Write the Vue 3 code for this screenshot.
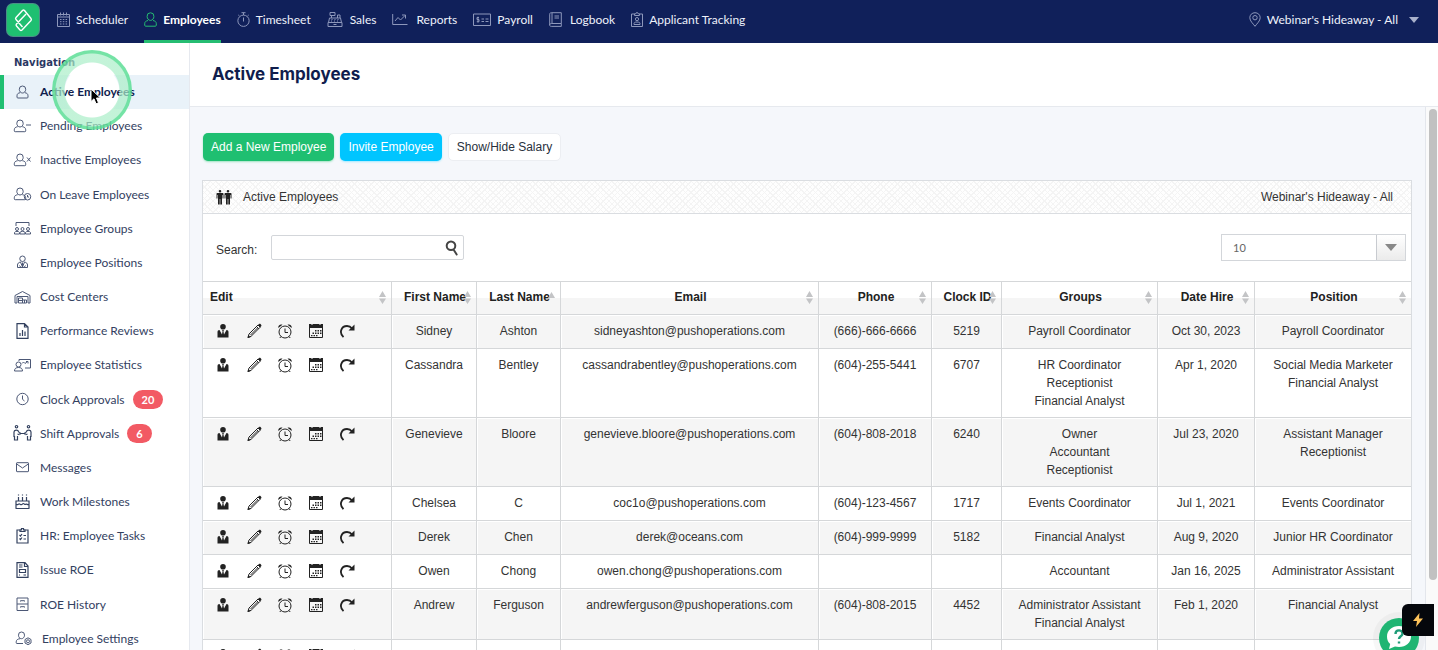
<script setup>
import { ref } from 'vue'

const topNav = [
  { label: 'Scheduler', w: 13, box: '0 0 13 15', gap: 6, d: 'M.5 2.5h12v12H.5zM.5 5h12M3.5.5v3M6.5.5v3M9.5.5v3M3 7.5h1.500M5.800 7.500h1.500M8.600 7.500h1.500M3 9.700h1.500M5.800 9.700h1.500M8.600 9.700h1.500M3 12h1.500M5.800 12h1.500M8.600 12h1.500' },
  { label: 'Employees', w: 13, box: '0 0 13 15', gap: 6, active: true, d: 'M6.500 .8a3.400 3.400 0 0 1 3.400 3.600c0 2.200-1.500 4-3.400 4s-3.400-1.800-3.400-4A3.400 3.400 0 0 1 6.500.8zM4 8.500c-2 .4-3.300 1.300-3.300 3.200v1.500c0 .7.400 1 1 1h9.600c.6 0 1-.3 1-1v-1.500c0-1.900-1.300-2.800-3.300-3.200' },
  { label: 'Timesheet', w: 13, box: '0 0 13 15', gap: 6, d: 'M6.500 3.100a5.600 5.600 0 1 1 0 11.300 5.600 5.600 0 0 1 0-11.300zM6.500 3V.800M4.500.700h4M6.500 5.500v4M1.300 3l1.200 1M11.700 3l-1.200 1' },
  { label: 'Sales', w: 16, box: '0 0 16 15', gap: 7, d: 'M1 10.500h14v4H1zM1.500 10.500l1-4.500h11l1 4.500M4.500 6V3.500M3 .500h5v3H3zM10.500 6V3h2.500v3M4.500 7.500h1M7.500 7.500h1M10.500 7.500h1M4 9h1M7 9h1M10 9h1M6.500 12.500h3' },
  { label: 'Reports', w: 16, box: '0 0 16 15', gap: 8, d: 'M.7 2v10.500h14.800M3 9l3-3.500 2.500 2.500 4.500-4.500M10 3h3.500v3.500' },
  { label: 'Payroll', w: 18, box: '0 0 18 15', gap: 6, d: 'M.500 2h17v11.500H.500zM6 5.500H4v2h2v2.200H3.800M5 4.700v5.800M8.500 7h2.500M12.500 7h3M8.500 9.500h2.500M12.500 9.500h3' },
  { label: 'Logbook', w: 13, box: '0 0 13 15', gap: 8, d: 'M2.300.700h10v10.800h-10C1.300 11.500.700 12 .700 13s.600 1.400 1.600 1.400h10M.700 13V2.200C.700 1.200 1.300.700 2.300.700M3 .700v10.800M12.300 11.500v2.900M5.500 4h4.500M5.500 6h4.500' },
  { label: 'Applicant Tracking', w: 12, box: '0 0 12 15', gap: 6, d: 'M3.500 2h-3v12.500h11V2h-3M3.500 3.500V1.800h1.300a1.200 1.200 0 0 1 2.400 0h1.300v1.700zM6 5.500a1.600 1.600 0 0 1 0 3.200 1.600 1.600 0 0 1 0-3.200zM3 12.500v-1c0-1 1-1.500 3-1.500s3 .500 3 1.500v1z' }
]

const person = 'M7 3a3.200 3.200 0 0 1 3.200 3.300C10.200 8.300 8.800 10 7 10S3.800 8.300 3.800 6.300A3.200 3.200 0 0 1 7 3zM4.700 9.700C2.500 10 1.300 11 1.300 12.800v1c0 .600.300.900.900.900h9.600c.600 0 .9-.3.9-.9v-1c0-1.800-1.200-2.800-3.400-3.100'
const sideNav = [
  { label: 'Active Employees', active: true, d: 'M9.500 3a3.200 3.200 0 0 1 3.200 3.300c0 2-1.400 3.700-3.200 3.700S6.300 8.300 6.300 6.300A3.200 3.200 0 0 1 9.500 3zM7.200 9.700C5 10 4 11 4 12.800v1.300c0 .600.300.900.900.900h9.200c.600 0 .9-.3.9-.9v-1.300c0-1.800-1-2.800-3.200-3.100' },
  { label: 'Pending Employees', d: person + 'M13 8h5' },
  { label: 'Inactive Employees', d: person + 'M14 6.500l3.500 4M17.500 6.500l-3.500 4' },
  { label: 'On Leave Employees', d: person + 'M14.500 8.500a3.200 3.200 0 1 1 0 6.500 3.200 3.200 0 0 1 0-6.500zM14.500 10v2h1.500' },
  { label: 'Employee Groups', d: 'M3 7V3.500h13V7M4 8.500a1.500 1.500 0 1 1 0 3 1.500 1.500 0 0 1 0-3zM9.500 8.500a1.500 1.500 0 1 1 0 3 1.500 1.500 0 0 1 0-3zM15 8.500a1.500 1.500 0 1 1 0 3 1.500 1.500 0 0 1 0-3zM1.500 15v-1.500C2 12 6 12 6.500 13.500V15zM7 15v-1.500c.5-1.500 4.500-1.500 5 0V15zM12.500 15v-1.500c.5-1.500 4.500-1.500 5 0V15z' },
  { label: 'Employee Positions', d: 'M9.500 3a2.500 2.500 0 0 1 0 5.500 2.500 2.500 0 0 1 0-5.500zM7.500 9C5.500 9.500 4.500 10.500 4.500 12v2.500h10V12c0-1.500-1-2.500-3-3M7.500 9l2 5 2-5M9.500 9.500v4.500M6.500 12.500l1.500 2M12.500 12.500l-1.500 2' },
  { label: 'Cost Centers', d: 'M2 15V7.500l7.500-4 7.500 4V15h-2V8.500H4V15zM5.500 15v-5h4v5zM9.500 12h4v3h-4M5.500 12.500h4M11.500 12v3' },
  { label: 'Performance Reviews', bold: true, d: 'M4 1.700h7.500L15 5v11.300H4zM11.500 1.700V5H15M7 14v-3M9.500 14V8M12 14v-4.500' },
  { label: 'Employee Statistics', d: 'M6 5V3.500h11.500v8.500h-5.500M5.500 6a2.500 2.500 0 1 1 0 5 2.500 2.500 0 0 1 0-5zM1.500 15c0-2.500 1.500-3.500 4-3.500s4 1 4 3.500zM9 7.500l1.500-1.500 1.500 1.500 2.500-2M13 5.500h2v2' },
  { label: 'Clock Approvals', badge: '20', d: 'M9.500 3.300a5.700 5.700 0 1 1 0 11.400 5.700 5.700 0 0 1 0-11.400zM9.500 5.500v3.800l2 1.700' },
  { label: 'Shift Approvals', badge: '6', bold: true, d: 'M3.500 1.500a1.200 1.200 0 1 1 0 2.400 1.200 1.200 0 0 1 0-2.400zM15.500 1.500a1.200 1.200 0 1 1 0 2.400 1.200 1.200 0 0 1 0-2.400zM1 13V8c0-2.500 4-2.500 4.500-.5L7 9.500M1.500 12v4h3v-4M18 13V8c0-2.500-4-2.500-4.500-.5L12 9.500M17.500 12v4h-3v-4M7.300 8.500v2M11.700 8.500v2M7 9.500h5M4.500 10l2 .8M14.500 10l-2 .8' },
  { label: 'Messages', d: 'M4 4.700h11c.3 0 .5.200.5.500v8c0 .3-.2.500-.5.500H4c-.3 0-.5-.2-.5-.5v-8c0-.3.200-.5.500-.5zM3.700 6l5.800 4 5.800-4' },
  { label: 'Work Milestones', bold: true, d: 'M3 15V8h13v7M2.500 15.500h14M3 11c1.500 2 2.500-.5 3.500 0s2 1.500 3 0 2 1 3.200.3S15 12.500 16 11M5.500 8V4M9.500 8V4M13.500 8V4M5.500 1.500v1M9.500 1.500v1M13.500 1.500v1' },
  { label: 'HR: Employee Tasks', bold: true, d: 'M7 3H4v13h11V3h-3M7 4.500V2.800h1.500V1.500h2v1.300H12v1.700zM6.500 8l1 1 1.500-2M10.500 8.500h2.500M6.500 11.500l1 1 1.500-2M10.500 12h2.500' },
  { label: 'Issue ROE', bold: true, d: 'M4 1.700h8L15 5v11.300H4zM11.500 2v3.500H15M6 4h3.500M6 6h3.500M6.500 8.500h6v3h-6zM6 14h1M10.500 14h2.500' },
  { label: 'ROE History', d: 'M4 3h11v12.500H4zM4 9h11M7.500 6.500V5.700h4v.8M7.500 12.500v-.8h4v.8' },
  { label: 'Employee Settings', nudge: true, d: 'M7.500 3a3 3 0 0 1 3 3.200c0 2-1.300 3.500-3 3.500s-3-1.500-3-3.500A3 3 0 0 1 7.500 3zM9 14.500H3c-.6 0-.8-.3-.8-.8v-.8c0-2 1.500-3 4-3.200M14 8.800l3 1.700v3.500l-3 1.700-3-1.700v-3.500zM14 10.800a1.500 1.500 0 1 1 0 3 1.500 1.500 0 0 1 0-3z' }
]

const columns = [
  { label: 'Edit', w: 189 },
  { label: 'First Name', w: 85 },
  { label: 'Last Name', w: 84, asc: true },
  { label: 'Email', w: 258 },
  { label: 'Phone', w: 113 },
  { label: 'Clock ID', w: 70 },
  { label: 'Groups', w: 156 },
  { label: 'Date Hire', w: 97 },
  { label: 'Position', w: 156 }
]

const rows = [
  ['Sidney', 'Ashton', 'sidneyashton@pushoperations.com', '(666)-666-6666', '5219', 'Payroll Coordinator', 'Oct 30, 2023', 'Payroll Coordinator'],
  ['Cassandra', 'Bentley', 'cassandrabentley@pushoperations.com', '(604)-255-5441', '6707', 'HR Coordinator\nReceptionist\nFinancial Analyst', 'Apr 1, 2020', 'Social Media Marketer\nFinancial Analyst'],
  ['Genevieve', 'Bloore', 'genevieve.bloore@pushoperations.com', '(604)-808-2018', '6240', 'Owner\nAccountant\nReceptionist', 'Jul 23, 2020', 'Assistant Manager\nReceptionist'],
  ['Chelsea', 'C', 'coc1o@pushoperations.com', '(604)-123-4567', '1717', 'Events Coordinator', 'Jul 1, 2021', 'Events Coordinator'],
  ['Derek', 'Chen', 'derek@oceans.com', '(604)-999-9999', '5182', 'Financial Analyst', 'Aug 9, 2020', 'Junior HR Coordinator'],
  ['Owen', 'Chong', 'owen.chong@pushoperations.com', '', '', 'Accountant', 'Jan 16, 2025', 'Administrator Assistant'],
  ['Andrew', 'Ferguson', 'andrewferguson@pushoperations.com', '(604)-808-2015', '4452', 'Administrator Assistant\nFinancial Analyst', 'Feb 1, 2020', 'Financial Analyst'],
  ['', '', '', '', '', '', '', '']
]

const actions = [
  { name: 'Profile', fill: 'M8 1a2.800 2.800 0 1 1 0 5.600A2.800 2.800 0 0 1 8 1zM2.500 14.500V9c0-1.200.6-1.700 2-1.900L7 11.500l.6-3.500-.6-.9h2l-.6.900.6 3.500 2.500-4.400c1.400.2 2 .7 2 1.900v5.500z' },
  { name: 'Edit', line: 'M2 14.500l1-3.500L12 2l2.200 2.200-9 9zM10.500 3.500l2.200 2.200M4.500 12l7-7', fill: 'M1.500 15l.8-3 2.200 2.200zM12 2l1-1c.5-.4 1-.3 1.500.100l.6.600c.5.500.5 1 .1 1.500l-1 1z' },
  { name: 'Clock', line: 'M8 3a6 6 0 1 1 0 12A6 6 0 0 1 8 3zM8 5.500V9.500h3M4 13.500l-1.200 1.500M12 13.500l1.200 1.500', fill: 'M1.300 5C1 2.500 3 1 5.500 1.700zM14.700 5C15 2.500 13 1 10.500 1.700z' },
  { name: 'Schedule', line: 'M1.500 2.500h13v12h-13z', fill: 'M1 1h2.500v1h1V1h7v1h1V1H15v4H1zM7 7h1.500v1.500H7zM9.500 7H11v1.500H9.500zM12 7h1.500v1.500H12zM4.500 9.500H6V11H4.500zM7 9.500h1.500V11H7zM9.500 9.500H11V11H9.500zM12 9.500h1.500V11H12zM3 12h1.500v1.200H3zM5.500 12H7v1.200H5.500zM8 12h1.500v1.200H8z' },
  { name: 'Reset', arc: 'M4.500 14.200C-.5 9.500 2.500 3 8 3c2.200 0 3.800.9 5 2.500', fill: 'M15.500 1.500v6h-6z' }
]

const search = ref('')
const pageSize = ref('10')
</script>

<template>
  <div class="app">
    <header class="topbar">
      <a href="#" class="logo" aria-label="Home">
        <svg viewBox="0 0 32 32"><path d="M15.500 6.500q1-1 2 0l6.500 8q.8 1 0 2L15 26q-1 .9-2 0l-3.500-4q-.9-1 0-2L19 10M15.500 6.500L9 13.500q-.9 1 0 2l6.500 7.500" /></svg>
      </a>
      <nav class="top-nav" aria-label="Main">
        <a v-for="n in topNav" :key="n.label" href="#" :class="{ active: n.active }" :style="{ gap: n.gap + 'px' }">
          <svg :viewBox="n.box" :width="n.w" height="15"><path :d="n.d" /></svg>
          <span>{{ n.label }}</span>
        </a>
      </nav>
      <button class="location">
        <svg viewBox="0 0 12 15" width="12" height="15"><path d="M6 .700c3 0 5.200 2.200 5.200 5C11.200 9 8 11.500 6 14.300 4 11.500.800 9 .800 5.700c0-2.800 2.200-5 5.200-5zM6 3.500a2.200 2.200 0 1 1 0 4.400 2.200 2.200 0 0 1 0-4.400z" /></svg>
        <span>Webinar's Hideaway - All</span>
        <i class="caret"></i>
      </button>
    </header>

    <div class="body">
      <aside class="sidebar">
        <h2>Navigation</h2>
        <nav class="side-nav" aria-label="Employees">
          <a v-for="n in sideNav" :key="n.label" href="#" :class="{ active: n.active, bold: n.bold, nudge: n.nudge }">
            <svg viewBox="0 0 19 18" width="19" height="18"><path :d="n.d" /></svg>
            <span>{{ n.label }}</span>
            <b v-if="n.badge" class="badge">{{ n.badge }}</b>
          </a>
        </nav>
      </aside>

      <main class="main">
        <div class="page-head"><h1>Active Employees</h1></div>
        <div class="scroll">
          <div class="content">
            <div class="buttons">
              <button class="btn green">Add a New Employee</button>
              <button class="btn blue">Invite Employee</button>
              <button class="btn plain">Show/Hide Salary</button>
            </div>

            <section class="panel">
              <div class="panel-head">
                <svg viewBox="0 0 16 15" width="16" height="15"><path d="M4 0a1.300 1.300 0 1 1 0 2.600A1.300 1.300 0 0 1 4 0zM1.500 3h5C7.300 3 7.500 3.500 7.500 4v4.500h-1V5H6v9.500H4.300V9h-.6v5.500H2V5h-.5v3.500h-1V4c0-.5.200-1 1-1zM12 0a1.300 1.300 0 1 1 0 2.600A1.300 1.300 0 0 1 12 0zM9.500 3h5c.8 0 1 .5 1 1v4.500h-1V5H14v9.500h-1.700V9h-.6v5.500H10V5h-.5v3.500h-1V4c0-.5.200-1 1-1z" /></svg>
                <span>Active Employees</span>
                <span class="where">Webinar's Hideaway - All</span>
              </div>
              <div class="tools">
                <label for="search">Search:</label>
                <div class="search-box">
                  <input id="search" v-model="search" type="text" />
                  <svg viewBox="0 0 14 16" width="14" height="16"><path d="M6 1.500a4.300 4.300 0 1 1 0 8.600 4.300 4.300 0 0 1 0-8.600zM8.500 9.500l3.200 5" /></svg>
                </div>
                <div class="page-size">
                  <select v-model="pageSize" aria-label="Rows per page">
                    <option>10</option>
                    <option>25</option>
                    <option>50</option>
                  </select>
                  <span class="drop"><i class="caret"></i></span>
                </div>
              </div>
              <table>
                <colgroup><col v-for="c in columns" :key="c.label" :style="{ width: c.w + 'px' }" /></colgroup>
                <thead>
                  <tr>
                    <th v-for="c in columns" :key="c.label" scope="col">
                      <button>
                        <span>{{ c.label }}</span>
                        <svg viewBox="0 0 7 13" width="7" height="13"><path :d="c.asc ? 'M3.500 1L7 7H0z' : 'M3.500 0L7 6H0zM0 7.500h7L3.500 13z'" /></svg>
                      </button>
                    </th>
                  </tr>
                </thead>
                <tbody>
                  <tr v-for="(r, i) in rows" :key="i">
                    <td class="edit">
                      <div class="acts">
                        <button v-for="a in actions" :key="a.name" :aria-label="a.name">
                          <svg viewBox="0 0 16 16" width="16" height="16">
                            <path v-if="a.line" class="line" :d="a.line" />
                            <path v-if="a.arc" class="arc" :d="a.arc" />
                            <path :d="a.fill" />
                          </svg>
                        </button>
                      </div>
                    </td>
                    <td v-for="(c, j) in r" :key="j">{{ c }}</td>
                  </tr>
                </tbody>
              </table>
            </section>
          </div>
          <div class="track"><div class="thumb"></div></div>
        </div>
      </main>
    </div>

    <div class="click-ring"></div>
    <svg class="pointer" viewBox="0 0 12 18" width="12" height="18"><path d="M1 1v12.500l3-2.700 2 5 2.500-1-2-4.800h4z" /></svg>

    <button class="help" aria-label="Help">
      <svg viewBox="0 0 40 40"><path class="bubble" d="M20 8c7 0 12 4.500 12 10.500S27 29 20 29c-1.500 0-2.800-.2-4-.5L10 31l1.200-5C9 24 8 21.500 8 18.500 8 12.500 13 8 20 8z" /><path class="q" d="M16.500 16c0-5 7-4.500 7-.5 0 3-3.500 2.500-3.500 5.500M20 23.500v2" /></svg>
    </button>
    <button class="bolt" aria-label="Quick actions">
      <svg viewBox="0 0 12 16" width="12" height="16"><path d="M7.500 1L1 9h4l-1 6 7-8.500H7z" /></svg>
    </button>
  </div>
</template>

<style>
body { overflow: hidden; }
</style>

<style scoped>
* { box-sizing: border-box; }
.app {
  position: relative;
  display: flex;
  flex-direction: column;
  height: 100vh;
  overflow: hidden;
  background: #fff;
  font-family: "Liberation Sans", Arial, sans-serif;
  font-size: 12px;
  color: #333;
}
a { text-decoration: none; }
button { border: 0; background: none; padding: 0; font: inherit; color: inherit; cursor: pointer; }

.topbar {
  display: flex;
  flex: none;
  height: 43px;
  padding-left: 7px;
  background: #10205a;
  font-family: Lato, sans-serif;
  font-size: 12px;
  color: #eef1fa;
}
.logo {
  width: 32px;
  height: 32px;
  margin: 4px 18px 0 0;
  border-radius: 6px;
  background: #1fbf71;
  box-shadow: 0 0 0 1px #4a8f86;
}
.logo svg { display: block; fill: none; stroke: #fff; stroke-width: 1.400; stroke-linejoin: round; }
.top-nav { display: flex; gap: 16px; }
.top-nav a {
  display: flex;
  align-items: center;
  height: 43px;
  padding-bottom: 1px;
  border-bottom: 3px solid transparent;
  color: inherit;
  white-space: nowrap;
}
.top-nav a.active { border-color: #26bd72; color: #fff; font-weight: 700; }
.top-nav svg, .location svg { fill: none; stroke: #8d97bb; stroke-width: 1; flex: none; }
.top-nav a.active svg { stroke: #26bd72; }
.location { display: flex; align-items: center; gap: 6px; margin: 0 19px 4px auto; }
.caret { border: 5px solid transparent; border-top: 6px solid #a9b1cb; border-bottom: 0; }
.location .caret { margin-left: 5px; }

.body { display: flex; flex: 1; min-height: 0; }
.sidebar {
  display: flex;
  flex-direction: column;
  flex: none;
  width: 190px;
  border-right: 1px solid #e6e9ef;
  font-family: Lato, sans-serif;
  font-size: 12px;
  color: #33415f;
}
.sidebar h2 {
  flex: none;
  margin: 0;
  padding: 10px 14px 0;
  height: 32px;
  font: 700 10px/20px "DejaVu Sans", sans-serif;
  color: #2b3763;
}
.side-nav { display: flex; flex: 1; flex-direction: column; margin-bottom: -6px; }
.side-nav a {
  display: flex;
  flex: 1;
  align-items: center;
  gap: 8px;
  padding: 0 0 1px 9px;
  border-left: 4px solid transparent;
  color: inherit;
  white-space: nowrap;
}
.side-nav a.active {
  border-color: #1fbf71;
  background: radial-gradient(circle 28px at 88px 50%, #fff 27px, #e9f2f9 28px);
  color: #101d4d;
  font-weight: 700;
}
.side-nav a.nudge { padding-left: 10px; gap: 9px; }
.side-nav svg { flex: none; fill: none; stroke: #4c5876; stroke-width: 1; }
.side-nav a.bold svg { stroke: #33415f; stroke-width: 1.200; }
.badge {
  padding: 0 9px;
  border-radius: 10px;
  background: #f25a64;
  color: #fff;
  font-size: 11px;
  line-height: 19px;
}

.main { display: flex; flex: 1; flex-direction: column; min-width: 0; background: #f5f7fb; }
.page-head { flex: none; height: 64px; padding: 0 22px; background: #fff; border-bottom: 1px solid #e6e9ee; }
h1 { margin: 0; font: 700 17px/63px Inter, sans-serif; color: #101d4d; }
.scroll { display: flex; flex: 1; min-height: 0; }
.content { flex: 1; min-width: 0; padding: 26px 13px 0 12px; }
.track { flex: none; width: 13px; padding: 2px 1px 0 3px; border-left: 1px solid #e3e6ec; background: #fafafa; }
.thumb { height: 87%; border-radius: 5px; background: #c1c1c1; }
.buttons { display: flex; gap: 6px; margin-bottom: 19px; padding-left: 1px; }
.btn { height: 28px; padding: 0 8px; border-radius: 5px; color: #fff; white-space: nowrap; }
.btn.green { background: #1fbf71; box-shadow: 0 1px 2px #9fe3c2; }
.btn.blue { background: #00c5ff; box-shadow: 0 1px 2px #a5e9ff; }
.btn.plain { background: #fff; border: 1px solid #eceef2; color: #28303c; }

.panel { border: 1px solid #dadde1; background: #fff; }
.panel-head {
  display: flex;
  align-items: center;
  gap: 11px;
  height: 33px;
  padding: 0 18px 0 13px;
  border-bottom: 1px solid #dadde1;
  background:
    repeating-linear-gradient(45deg, transparent 0 3px, #f4f4f4 3px 4px),
    repeating-linear-gradient(-45deg, transparent 0 3px, #f4f4f4 3px 4px),
    #fefefe;
}
.panel-head svg { fill: #222; }
.where { margin-left: auto; }
.tools { display: flex; align-items: center; height: 67px; padding: 0 5px 0 13px; }
.tools label { margin-right: 14px; padding-top: 4px; }
.search-box { display: flex; align-items: center; width: 193px; height: 25px; padding-right: 4px; border: 1px solid #d3d6da; border-radius: 2px; }
.search-box input { flex: 1; min-width: 0; border: 0; outline: 0; background: none; font: inherit; }
.search-box svg { fill: none; stroke: #444; stroke-width: 2; stroke-linecap: round; }
.page-size { display: flex; width: 185px; height: 27px; margin-left: auto; border: 1px solid #d3d6da; }
.page-size select { flex: 1; appearance: none; border: 0; padding: 0 11px; background: #fff; font: 11px Lato, sans-serif; color: #666; }
.drop { display: flex; align-items: center; justify-content: center; width: 29px; border-left: 1px solid #c8cbd0; background: linear-gradient(#fff, #ebebeb); }
.drop .caret { border-width: 7px 6px 0; border-top-color: #888; }

table { width: 100%; table-layout: fixed; border-collapse: separate; border-spacing: 0; }
th, td { padding: 0; border-right: 1px solid #d5d7d9; border-bottom: 1px solid #d5d7d9; vertical-align: top; }
th:last-child, td:last-child { border-right: 0; }
th { border-top: 1px solid #d5d7d9; background: linear-gradient(#fff 50%, #f5f5f5 50%); }
th button { display: grid; align-items: center; width: 100%; height: 32px; padding: 0 5px 2px 7px; font-weight: 700; color: #222; white-space: nowrap; }
th span { grid-area: 1 / 1; justify-self: center; }
th:first-child span { justify-self: start; }
th svg { grid-area: 1 / 1; justify-self: end; fill: #c3c4c6; }
td { padding: 7px 2px; line-height: 18px; text-align: center; white-space: pre-line; box-shadow: inset 1px 1px #fff; }
tbody tr:nth-child(odd) td { background: #f5f5f5; }
td.edit { padding: 0 0 0 12px; }
.acts { display: flex; align-items: center; gap: 15px; height: 33px; padding-bottom: 2px; }
.acts button { width: 16px; height: 16px; }
.acts svg { display: block; fill: #222; }
.acts .line { fill: none; stroke: #222; stroke-width: 1; }
.acts .arc { fill: none; stroke: #222; stroke-width: 1.800; }

.click-ring {
  position: absolute;
  left: 52px;
  top: 50px;
  width: 80px;
  height: 80px;
  border-radius: 50%;
  background: radial-gradient(circle closest-side, transparent 27px, rgba(170, 238, 200, .7) 28px, rgba(170, 238, 200, .7) 36px, rgba(92, 222, 150, .85) 37px);
  pointer-events: none;
}
.pointer { position: absolute; left: 90px; top: 88px; fill: #000; stroke: #fff; stroke-width: 1; pointer-events: none; }
.help {
  position: absolute;
  right: 19px;
  bottom: -8px;
  width: 40px;
  height: 40px;
  border-radius: 50%;
  background: #1fb573;
  box-shadow: 0 0 0 6px rgba(0, 0, 0, .03);
}
.help svg { display: block; }
.bubble { fill: #fff; }
.q { fill: none; stroke: #1f9c78; stroke-width: 2.400; }
.bolt {
  position: absolute;
  right: 4px;
  bottom: 14px;
  display: grid;
  place-items: center;
  width: 32px;
  height: 32px;
  border-radius: 6px 0 0 6px;
  background: #05070c;
}
.bolt svg { fill: #fdc25a; }
</style>
